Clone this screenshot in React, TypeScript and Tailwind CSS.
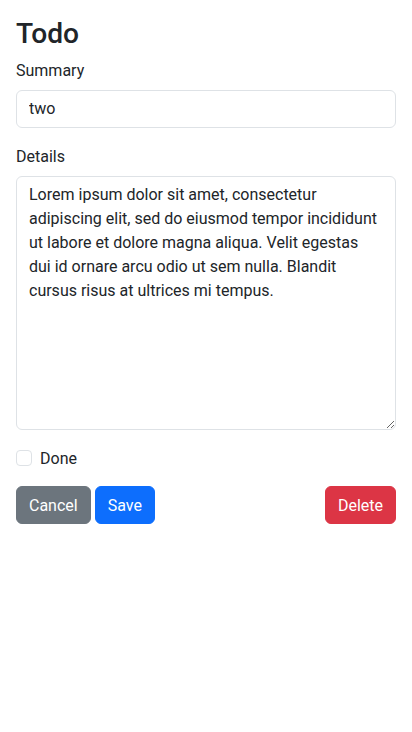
const details =
  "Lorem ipsum dolor sit amet, consectetur adipiscing elit, sed do eiusmod tempor incididunt ut labore et dolore magna aliqua. Velit egestas dui id ornare arcu odio ut sem nulla. Blandit cursus risus at ultrices mi tempus.";

export default function App() {
  return (
    <div className="min-h-[732px] bg-white p-4 font-['Roboto',sans-serif] text-base leading-6 text-[#212529]">
      <h1 className="mb-[7px] pt-px text-[28.18px] leading-[1.2] font-medium">Todo</h1>

      {/* Summary */}
      <div className="mb-4">
        <label className="mb-2 block pt-px leading-[23px]">Summary</label>
        <input
          type="text"
          defaultValue="two"
          className="block h-[38px] w-full rounded-[6px] border border-[#dee2e6] px-3 py-1.5 text-[#212529] outline-none"
        />
      </div>

      {/* Details */}
      <div className="mb-4">
        <label className="mb-2 block pt-px leading-[23px]">Details</label>
        <textarea
          defaultValue={details}
          className="block h-[254px] w-full rounded-[6px] border border-[#dee2e6] px-3 py-1.5 text-[#212529] outline-none"
        />
      </div>

      {/* Done */}
      <div className="mb-4 flex h-6 items-center gap-2">
        <span className="h-4 w-4 rounded-[4px] border border-[#dee2e6] bg-white" />
        <label className="pt-px leading-[23px]">Done</label>
      </div>

      {/* Actions */}
      <div className="flex items-center">
        <button className="h-[38px] rounded-[6px] border border-[#6c757d] bg-[#6c757d] px-3 pt-[2px] text-white">
          Cancel
        </button>
        <button className="ml-1 h-[38px] rounded-[6px] border border-[#0d6efd] bg-[#0d6efd] px-3 pt-[2px] text-white">
          Save
        </button>
        <button className="ml-auto h-[38px] rounded-[6px] border border-[#dc3545] bg-[#dc3545] px-3 pt-[2px] text-white">
          Delete
        </button>
      </div>
    </div>
  );
}
